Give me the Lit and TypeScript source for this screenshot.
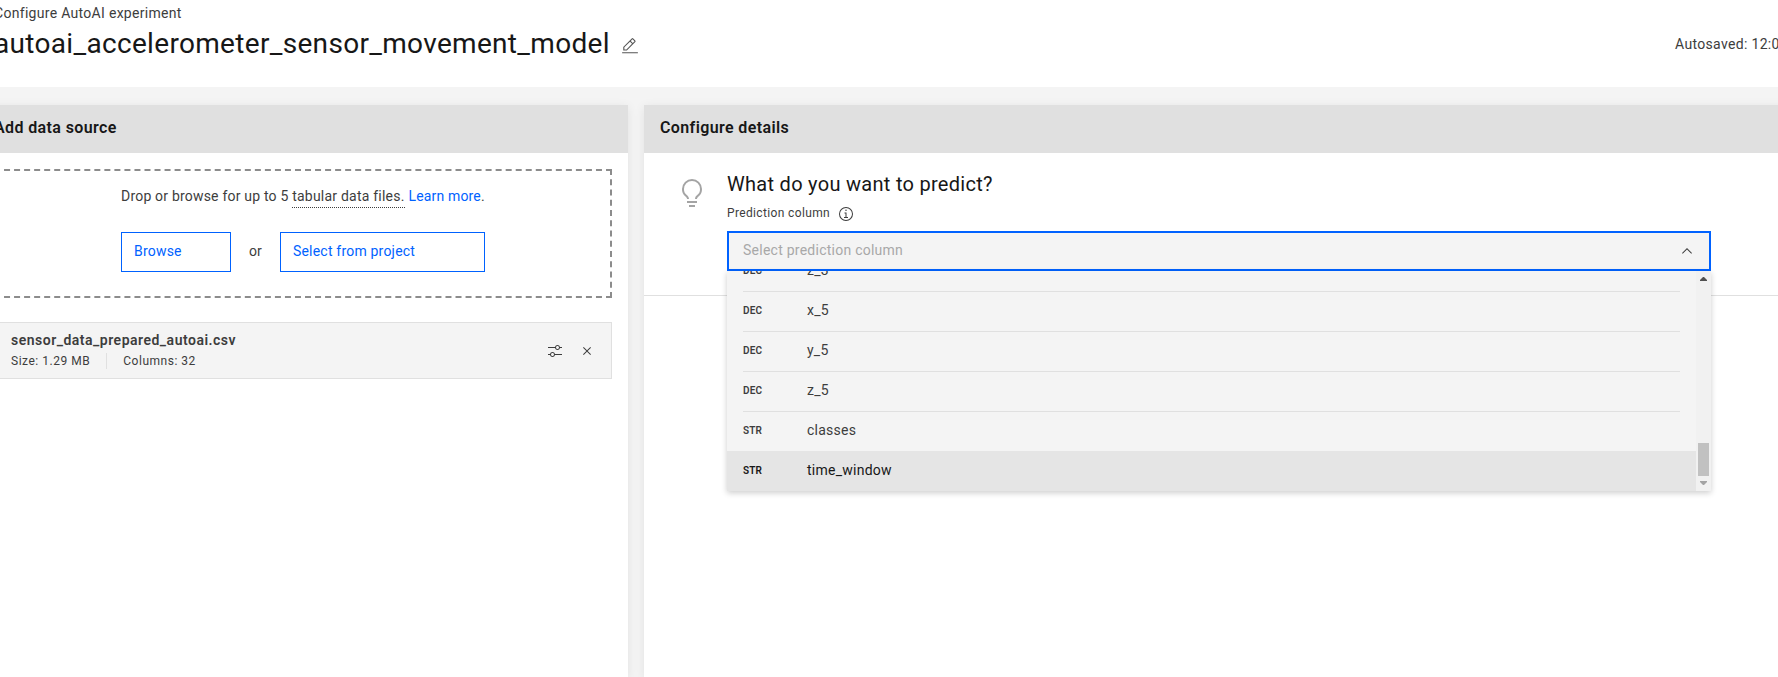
import { LitElement, html, css, svg } from "lit";
import { customElement, property } from "lit/decorators.js";
import { classMap } from "lit/directives/class-map.js";

type Column = { type: string; name: string };

const columns: Column[] = [
  { type: "DEC", name: "z_3" },
  { type: "DEC", name: "x_5" },
  { type: "DEC", name: "y_5" },
  { type: "DEC", name: "z_5" },
  { type: "STR", name: "classes" },
  { type: "STR", name: "time_window" },
];

const icons = {
  edit: svg`<path d="M2 27h28v2H2zM25.4 9a2 2 0 0 0 0-2.8l-3.6-3.6a2 2 0 0 0-2.8 0l-15 15V24h6.4zm-5-5L24 7.6l-3 3L17.4 7zM6 22v-3.6l10-10 3.6 3.6-10 10z"/>`,
  settings: svg`<path d="M30 8h-4.1c-.5-2.3-2.5-4-4.9-4s-4.4 1.7-4.9 4H2v2h14.1c.5 2.3 2.5 4 4.9 4s4.4-1.7 4.9-4H30zm-9 4c-1.700 0-3-1.300-3-3s1.300-3 3-3 3 1.300 3 3-1.300 3-3 3zM2 24h4.100c.5 2.300 2.500 4 4.900 4s4.400-1.700 4.900-4H30v-2H15.900c-.5-2.300-2.500-4-4.900-4s-4.400 1.700-4.900 4H2zm9-4c1.700 0 3 1.300 3 3s-1.300 3-3 3-3-1.300-3-3 1.300-3 3-3z"/>`,
  close: svg`<path d="M24 9.400 22.600 8 16 14.600 9.400 8 8 9.400 14.600 16 8 22.600 9.400 24 16 17.400 22.600 24 24 22.600 17.400 16z"/>`,
  idea: svg`<path d="M11 24h10v2H11zM13 28h6v2h-6zM16 2A10 10 0 0 0 6 12a9.200 9.200 0 0 0 3.500 7.600c1 .9 1.500 1.500 1.500 2.400h2c0-1.800-1.100-2.900-2.200-3.900A7.200 7.200 0 0 1 8 12a8 8 0 0 1 16 0 7.200 7.200 0 0 1-2.800 6.100c-1.100 1-2.200 2-2.200 3.900h2c0-.9.500-1.500 1.500-2.400A9.200 9.200 0 0 0 26 12 10 10 0 0 0 16 2z"/>`,
  info: svg`<path d="M17 22v-9h-4v2h2v7h-3v2h8v-2zM16 7a1.500 1.500 0 1 0 0 3 1.500 1.500 0 0 0 0-3z"/><path d="M16 30a14 14 0 1 1 0-28 14 14 0 0 1 0 28zm0-26a12 12 0 1 0 0 24 12 12 0 0 0 0-24z"/>`,
  chevron: svg`<path d="M16 10 26 20 24.600 21.400 16 12.800 7.400 21.400 6 20z"/>`,
};

@customElement("app-icon")
export class AppIcon extends LitElement {
  @property() name: keyof typeof icons = "close";

  static styles = css`
    :host {
      display: block;
      width: 16px;
      height: 16px;
      flex: none;
    }
    svg {
      display: block;
      width: 100%;
      height: 100%;
      fill: currentColor;
    }
  `;

  render() {
    return html`<svg viewBox="0 0 32 32">${icons[this.name]}</svg>`;
  }
}

@customElement("column-select")
export class ColumnSelect extends LitElement {
  static styles = css`
    * {
      box-sizing: border-box;
    }
    :host {
      display: block;
      position: relative;
      height: 40px;
      letter-spacing: 0.25px;
    }
    .field {
      display: flex;
      align-items: center;
      justify-content: space-between;
      height: 40px;
      padding: 0 14px 0 14px;
      border: 2px solid #0062ff;
      background: #f4f4f4;
      line-height: 34px;
    }
    .placeholder {
      height: 36px;
      color: #a8a8a8;
    }
    .menu {
      position: absolute;
      top: 40px;
      left: 0;
      right: 0;
      z-index: 1;
      display: flex;
      height: 220px;
      background: #f4f4f4;
      box-shadow: 0 2px 6px rgba(0, 0, 0, 0.2);
    }
    .list {
      flex: 1;
      display: flex;
      flex-direction: column;
      justify-content: flex-end;
      overflow: hidden;
    }
    .row {
      flex: none;
      height: 40px;
      padding: 0 16px;
    }
    .cell {
      display: flex;
      height: 40px;
      border-top: 1px solid #e0e0e0;
      line-height: 36px;
    }
    .type {
      width: 64px;
      font-size: 10px;
      font-weight: 600;
      line-height: 38px;
      letter-spacing: 0.15px;
    }
    .active {
      background: #e5e5e5;
      color: #171717;
    }
    .active .cell {
      border-color: transparent;
    }
    .scrollbar {
      display: flex;
      flex-direction: column;
      align-items: center;
      justify-content: space-between;
      width: 15px;
      padding: 6px 0;
      background: #f1f1f1;
    }
    .arrow {
      display: block;
      width: 7px;
      height: 4px;
    }
    .up {
      fill: #505050;
    }
    .down {
      fill: #a3a3a3;
    }
    .thumb {
      width: 11px;
      height: 33px;
      margin: auto 0 5px;
      background: #c1c1c1;
    }
  `;

  render() {
    return html`
      <div class="field">
        <span class="placeholder">Select prediction column</span>
        <app-icon name="chevron"></app-icon>
      </div>
      <div class="menu">
        <div class="list">
          ${columns.map(
            (c, i) => html`<div class=${classMap({ row: true, active: i === columns.length - 1 })}>
              <div class="cell"><span class="type">${c.type}</span><span>${c.name}</span></div>
            </div>`
          )}
        </div>
        <div class="scrollbar">
          <svg class="arrow up" viewBox="0 0 7 4"><path d="M0 4V3L3 0h1l3 3v1z" /></svg>
          <div class="thumb"></div>
          <svg class="arrow down" viewBox="0 0 7 4"><path d="M0 0v1l3 3h1l3-3V0z" /></svg>
        </div>
      </div>
    `;
  }
}

@customElement("app-root")
export class AppRoot extends LitElement {
  static styles = css`
    * {
      box-sizing: border-box;
    }
    :host {
      display: flex;
      flex-direction: column;
      height: 100vh;
      overflow: hidden;
      background: #f4f4f4;
      color: #3d3d3d;
      font: 14px/18px Roboto, "Noto Sans", sans-serif;
      letter-spacing: 0.2px;
      white-space: nowrap;
    }
    .header {
      display: flex;
      justify-content: space-between;
      flex: none;
      height: 87px;
      margin-left: -6px;
      background: #fff;
    }
    .crumb {
      padding-top: 4px;
      line-height: 18px;
      letter-spacing: 0.3px;
    }
    .title-row {
      display: flex;
      gap: 11px;
      padding-top: 4px;
    }
    .title {
      margin: 0;
      color: #171717;
      font-size: 28px;
      font-weight: 400;
      line-height: 36px;
      letter-spacing: 0.32px;
    }
    .title-row app-icon {
      width: 18px;
      height: 18px;
      margin-top: 11px;
      color: #565656;
    }
    .saved {
      width: 103px;
      padding-top: 35px;
      letter-spacing: 0.33px;
    }
    .body {
      display: grid;
      grid-template-columns: 650px 1fr;
      gap: 16px;
      flex: 1;
      margin: 0 -22px;
      padding-top: 18px;
    }
    .panel {
      background: #fff;
      box-shadow: 0 2px 10px rgba(0, 0, 0, 0.08);
    }
    .panel-title {
      margin: 0;
      height: 48px;
      padding: 0 16px;
      background: #e0e0e0;
      color: #171717;
      font-size: 16px;
      font-weight: 600;
      line-height: 45px;
      letter-spacing: 0.38px;
    }
    .sources {
      padding: 16px;
    }
    .drop {
      display: flex;
      flex-direction: column;
      align-items: center;
      height: 129px;
      padding-top: 15px;
      border: 2px dashed #8c8c8c;
    }
    .hint {
      display: flex;
      width: 364px;
      height: 21px;
      line-height: 20px;
    }
    .term {
      margin-right: 4px;
      height: 22px;
      border-bottom: 1px dotted #3d3d3d;
      letter-spacing: 0.22px;
    }
    .link {
      color: #0062ff;
      letter-spacing: 0.15px;
    }
    .hint-lead {
      white-space: pre;
    }
    .actions {
      display: flex;
      justify-content: space-between;
      width: 364px;
      margin-top: 25px;
    }
    .button {
      height: 40px;
      padding: 0 12px 2px;
      border: 1px solid #0062ff;
      background: #fff;
      color: #0062ff;
      font: inherit;
      letter-spacing: inherit;
      line-height: 36px;
      text-align: left;
    }
    .browse {
      width: 110px;
    }
    .project {
      width: 205px;
    }
    .or {
      line-height: 38px;
    }
    .file {
      display: flex;
      align-items: center;
      height: 57px;
      margin-top: 24px;
      padding: 0 16px;
      border: 1px solid #e0e0e0;
      background: #f4f4f4;
    }
    .file-info {
      flex: 1;
      height: 50px;
    }
    .file-name {
      padding-top: 5px;
      font-weight: 600;
      letter-spacing: 0.5px;
    }
    .meta {
      display: flex;
      margin-top: 4px;
      font-size: 12px;
      line-height: 16px;
      letter-spacing: 0.52px;
    }
    .meta span + span {
      margin-left: 16px;
      padding-left: 16px;
      border-left: 1px solid #e0e0e0;
    }
    .file app-icon {
      margin-left: 16px;
    }
    .question {
      display: grid;
      grid-template-columns: 32px 984px;
      column-gap: 19px;
      height: 143px;
      padding: 17px 0 0 32px;
      border-bottom: 1px solid #e0e0e0;
    }
    .question > app-icon {
      width: 32px;
      height: 32px;
      margin-top: 7px;
      color: #a4a4a4;
    }
    .heading {
      margin: 0;
      color: #171717;
      font-size: 20px;
      font-weight: 400;
      line-height: 28px;
      letter-spacing: 0.29px;
    }
    .label {
      display: flex;
      gap: 8px;
      height: 33px;
      padding-top: 8px;
      font-size: 12px;
      line-height: 15px;
      letter-spacing: 0.36px;
    }
  `;

  render() {
    return html`
      <header class="header">
        <div>
          <div class="crumb">Configure AutoAI experiment</div>
          <div class="title-row">
            <h1 class="title">autoai_accelerometer_sensor_movement_model</h1>
            <app-icon name="edit"></app-icon>
          </div>
        </div>
        <div class="saved">Autosaved: 12:0</div>
      </header>
      <main class="body">
        <section class="panel">
          <h2 class="panel-title">Add data source</h2>
          <div class="sources">
            <div class="drop">
              <div class="hint">
                <span class="hint-lead">Drop or browse for up to 5 </span><span class="term">tabular data files.</span>
                <a class="link">Learn more</a>.
              </div>
              <div class="actions">
                <button class="button browse">Browse</button>
                <span class="or">or</span>
                <button class="button project">Select from project</button>
              </div>
            </div>
            <div class="file">
              <div class="file-info">
                <div class="file-name">sensor_data_prepared_autoai.csv</div>
                <div class="meta"><span>Size: 1.29 MB</span><span>Columns: 32</span></div>
              </div>
              <app-icon name="settings"></app-icon>
              <app-icon name="close"></app-icon>
            </div>
          </div>
        </section>
        <section class="panel">
          <h2 class="panel-title">Configure details</h2>
          <div class="question">
            <app-icon name="idea"></app-icon>
            <div>
              <h3 class="heading">What do you want to predict?</h3>
              <div class="label">Prediction column <app-icon name="info"></app-icon></div>
              <column-select></column-select>
            </div>
          </div>
        </section>
      </main>
    `;
  }
}
